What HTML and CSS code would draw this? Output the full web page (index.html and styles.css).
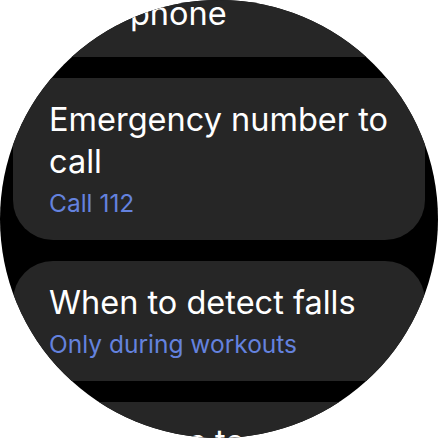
FILE: index.html
```html
<!DOCTYPE html>
<html lang="en">
<head>
<meta charset="utf-8">
<title>Fall detection</title>
<link rel="stylesheet" href="styles.css">
</head>
<body>
<div class="watch">
  <div class="list">
    <div class="card">
      <div class="title">Make emergency calls via a phone</div>
    </div>
    <div class="card">
      <div class="title">Emergency number to call</div>
      <div class="sub">Call 112</div>
    </div>
    <div class="card">
      <div class="title">When to detect falls</div>
      <div class="sub">Only during workouts</div>
    </div>
    <div class="card card-last">
      <div class="title">Messages to send</div>
    </div>
  </div>
</div>
</body>
</html>
```
FILE: styles.css
```css
html, body {
  margin: 0;
  padding: 0;
  background: #ffffff;
}
.watch {
  width: 438px;
  height: 438px;
  border-radius: 50%;
  overflow: hidden;
  background: #000000;
  font-family: Inter, Roboto, "Noto Sans", sans-serif;
}
.list {
  display: flex;
  flex-direction: column;
  gap: 21px;
  padding: 0 13px;
  margin-top: -70px;
}
.card {
  background: #262626;
  border-radius: 40px;
  padding: 21px 24px 22px 36px;
}
.card-last {
  padding-top: 19px;
}
.title {
  color: #ffffff;
  font-size: 32.5px;
  line-height: 42px;
}
.sub {
  color: #6482de;
  font-size: 24.5px;
  line-height: 30px;
  margin-top: 5px;
}
```
